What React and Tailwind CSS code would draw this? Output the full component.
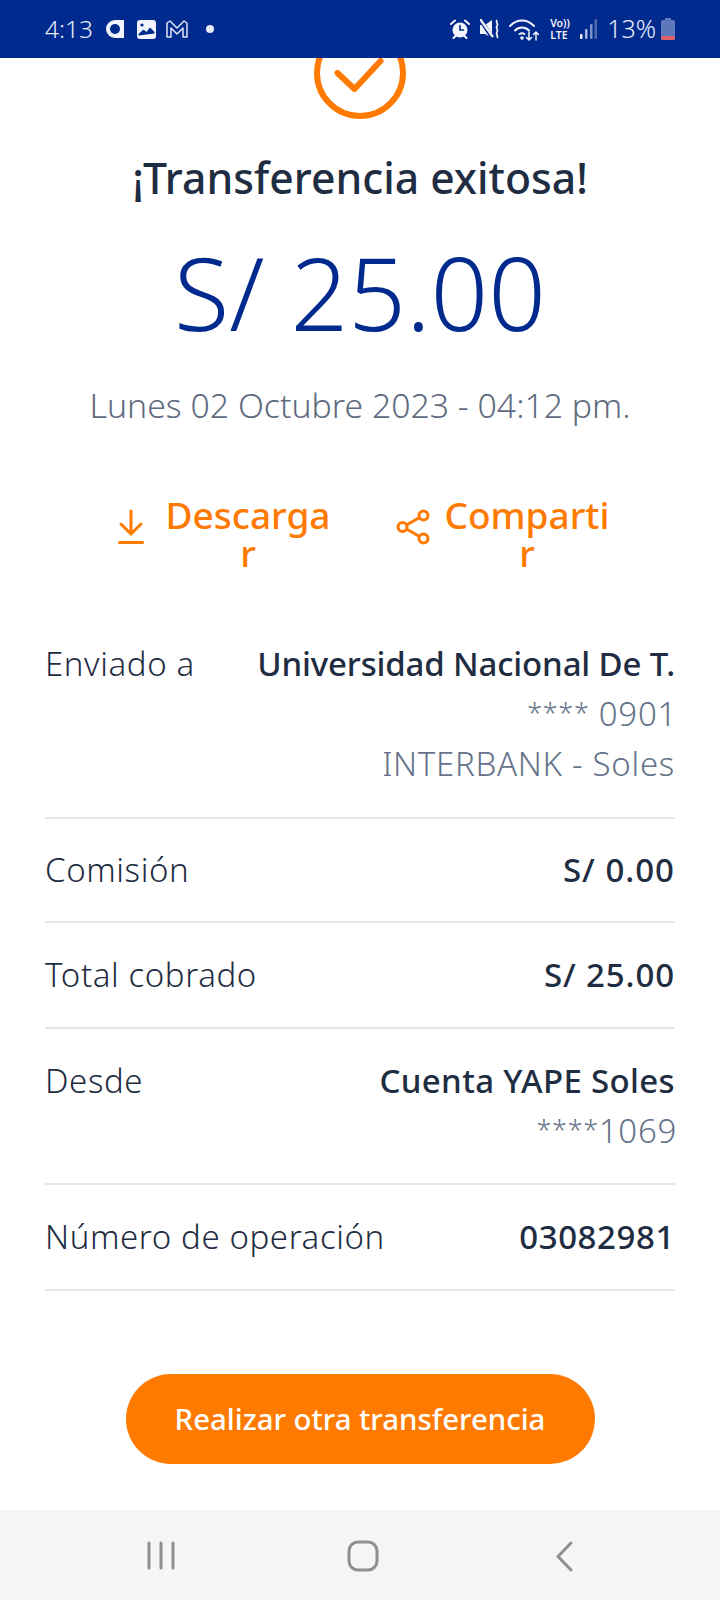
const font = { fontFamily: '"Noto Sans", sans-serif' };

function StatusBar() {
  return (
    <div className="h-[58px] shrink-0 bg-[#002a8d] flex items-center justify-between pl-[45px] pr-[45px] text-[#e6ebf7]">
      <div className="flex items-center">
        <span className="text-[24.500px] font-light w-[61px]">4:13</span>
        <svg width="18" height="18" viewBox="0 0 18 18">
          <path d="M9 0a9 9 0 1 0 0 18h9V0z" fill="#f2f4fb" />
          <circle cx="9" cy="9" r="5" fill="#002a8d" />
        </svg>
        <svg width="19" height="19" viewBox="0 0 19 19" className="ml-[13px]">
          <rect x="0" y="0" width="19" height="19" rx="3" fill="#f2f4fb" />
          <path d="M1.500 14l5-4.500 3 2.500 3.500-4.500 4.500 4.500v1.500l-16 2z" fill="#002a8d" />
          <circle cx="5" cy="5" r="1.600" fill="#002a8d" />
        </svg>
        <svg width="22" height="18" viewBox="0 0 22 18" className="ml-[10px]" fill="none" stroke="#dfe5f4" strokeWidth="1.500" strokeLinejoin="round">
          <path d="M1 17V3l3-2 7 7 7-7 3 2v14h-4V8l-6 6-6-6v9z" />
        </svg>
        <span className="w-[8px] h-[8px] rounded-full bg-[#e6ebf7] ml-[18px]" />
      </div>
      <div className="flex items-center">
        <svg width="20" height="20" viewBox="0 0 20 20" fill="none" stroke="#f2f4fb" strokeWidth="2" strokeLinecap="round">
          <circle cx="10" cy="11" r="7.500" fill="#f2f4fb" stroke="none" />
          <path d="M10 6.500V11h3.500" stroke="#002a8d" strokeWidth="1.600" />
          <path d="M1 5l4-3.500M19 5l-4-3.500M3.500 19l2-2M16.500 19l-2-2" />
        </svg>
        <svg width="20" height="20" viewBox="0 0 20 20" className="ml-[10px]">
          <path d="M0 6h5l7-5v18l-7-4H0z" fill="#f2f4fb" />
          <path d="M0 0l13 20" stroke="#002a8d" strokeWidth="4" />
          <path d="M0 0l13 18" stroke="#f2f4fb" strokeWidth="2.400" />
          <path d="M17 1c-2 3 2 3 0 6s2 3 0 6 2 3 0 6" stroke="#f2f4fb" strokeWidth="1.800" fill="none" />
        </svg>
        <svg width="30" height="24" viewBox="0 0 30 24" className="ml-[9px]" fill="none" stroke="#f2f4fb" strokeWidth="2" strokeLinecap="round">
          <path d="M1 9c7-7.500 17-7.500 24 0" />
          <path d="M6 13.500c4-4 10-4 14 0" />
          <path d="M10.500 17c1.500-1 3.500-1 5 0" />
          <circle cx="13" cy="21" r="0.800" fill="#f2f4fb" />
          <path d="M20 15v8m-2.500-2.500L20 23l2.500-2.500M27 23v-8m-2.500 2.500L27 15l2.500 2.500" strokeWidth="1.500" />
        </svg>
        <div className="ml-[11px] w-[21px] text-[10.500px] font-semibold leading-[12px] text-[#f2f4fb] whitespace-nowrap">
          <div>Vo))</div>
          <div>LTE</div>
        </div>
        <svg width="17" height="22" viewBox="0 0 17 22" className="ml-[9px]">
          <rect x="0" y="16" width="2.500" height="5" rx="1" fill="#f2f4fb" />
          <rect x="5" y="11" width="2.500" height="10" rx="1" fill="#a9b8de" />
          <rect x="10" y="6" width="2.500" height="15" rx="1" fill="#7b8fc8" />
          <rect x="14.500" y="1" width="2.500" height="20" rx="1" fill="#4f69b0" />
        </svg>
        <span className="text-[25px] font-light ml-[10px]">13%</span>
        <svg width="14" height="22" viewBox="0 0 14 22" className="ml-[5px]">
          <path d="M4 0h6v2h2a2 2 0 0 1 2 2v16a2 2 0 0 1-2 2H2a2 2 0 0 1-2-2V4a2 2 0 0 1 2-2h2z" fill="#5c78bb" />
          <path d="M0 18h14v2a2 2 0 0 1-2 2H2a2 2 0 0 1-2-2z" fill="#e0606a" />
        </svg>
      </div>
    </div>
  );
}

function Masked({ gap, digits }) {
  return (
    <div className="h-[50px] text-[33px] tracking-[0.7px] leading-[50px] font-light text-[#66738a] -mr-[2px]">
      <span className="text-[27px] leading-none align-[3px]">****</span>
      {gap && " "}
      {digits}
    </div>
  );
}

function Row({ label, value, valueTracking = "", children, className = "" }) {
  return (
    <div className={`flex justify-between border-b-2 border-[#e6e6e6] ${className}`}>
      <span className="text-[33px] tracking-[0.6px] leading-[50px] font-light text-[#1f2d42]">{label}</span>
      <div className="text-right">
        <div className={`text-[33px] leading-[50px] font-medium text-[#1f2d42] ${valueTracking}`}>{value}</div>
        {children}
      </div>
    </div>
  );
}

export default function App() {
  return (
    <div className="w-[720px] h-[1600px] flex flex-col bg-white overflow-hidden" style={font}>
      <StatusBar />
      <div className="flex-1 flex flex-col items-center overflow-hidden">
        <svg width="92" height="92" viewBox="0 0 92 92" className="-mt-[31px] shrink-0" fill="none" stroke="#ff7a00" strokeWidth="6" strokeLinecap="round" strokeLinejoin="round">
          <circle cx="46" cy="46" r="43" />
          <path d="M23.500 46l17 16 26-28" />
        </svg>
        <h1 className="mt-[31px] text-[42.700px] leading-[56px] font-medium text-[#1f2d42] whitespace-nowrap">¡Transferencia exitosa!</h1>
        <div className="mt-[26px] text-[101px] leading-[120px] font-light text-[#002a8d] whitespace-nowrap">S/ 25.00</div>
        <div className="mt-[31px] text-[33.800px] leading-[44px] font-light text-[#5f6b80] whitespace-nowrap">Lunes 02 Octubre 2023 - 04:12 pm.</div>

        <div className="mt-[69px] flex w-full pl-[118px] text-[#ff7a00] text-[37px] leading-[38px] font-medium">
          <div className="flex items-start w-[278px]">
            <svg width="26" height="36" viewBox="0 0 26 36" className="mt-[13px]" fill="none" stroke="#ff7a00" strokeWidth="3" strokeLinecap="round" strokeLinejoin="round">
              <path d="M13 2v22M3 15l10 10 10-10M1.500 33.500h23" />
            </svg>
            <div className="ml-[20px] w-[168px] text-center break-all">Descargar</div>
          </div>
          <div className="flex items-start">
            <svg width="34" height="36" viewBox="0 0 34 36" className="mt-[13px]" fill="none" stroke="#ff7a00" strokeWidth="3">
              <circle cx="6.500" cy="18" r="4.500" />
              <circle cx="27.500" cy="6.500" r="4.500" />
              <circle cx="27.500" cy="29.500" r="4.500" />
              <path d="M10.500 16l13-7.500M10.500 20l13 7.500" />
            </svg>
            <div className="ml-[13px] w-[168px] text-center break-all">Compartir</div>
          </div>
        </div>

        <div className="mt-[67px] w-full px-[45px]">
          <Row label="Enviado a" value="Universidad Nacional De T." valueTracking="tracking-[-0.15px]" className="pb-[28px]">
            <Masked gap digits="0901" />
            <div className="text-[33px] tracking-[0.7px] leading-[50px] font-light text-[#66738a]">INTERBANK - Soles</div>
          </Row>
          <Row label="Comisión" value="S/ 0.00" valueTracking="tracking-[1px]" className="py-[26px]" />
          <Row label="Total cobrado" value="S/ 25.00" valueTracking="tracking-[0.9px]" className="py-[27px]" />
          <Row label="Desde" value="Cuenta YAPE Soles" valueTracking="tracking-[0.35px]" className="py-[27px]">
            <Masked digits="1069" />
          </Row>
          <Row label="Número de operación" value="03082981" valueTracking="tracking-[0.6px]" className="py-[27px]" />
        </div>

        <div className="mt-[83px] w-[469px] h-[90px] rounded-[45px] bg-[#ff7a00] text-white text-[29.400px] font-medium flex items-center justify-center">
          Realizar otra transferencia
        </div>
      </div>
      <div className="h-[90px] shrink-0 bg-[#f5f5f5] flex items-center">
        <svg width="720" height="90" viewBox="0 0 720 90" fill="none" stroke="#8f8f8f" strokeWidth="3" strokeLinecap="round" strokeLinejoin="round">
          <path d="M149 33v25M161 33v25M173 33v25" />
          <rect x="349" y="32" width="28" height="28" rx="9" />
          <path d="M571 33l-13 13.500 13 13.500" />
        </svg>
      </div>
    </div>
  );
}
